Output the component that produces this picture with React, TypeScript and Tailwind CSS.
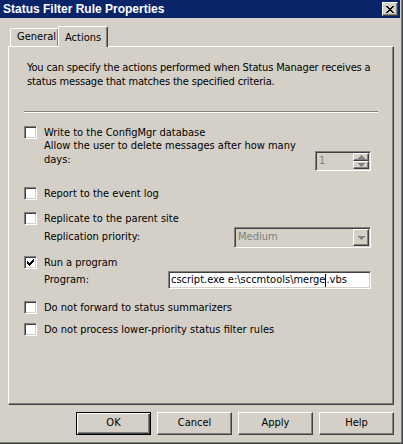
const SUNKEN =
  'border border-t-[#808080] border-l-[#808080] border-r-white border-b-white shadow-[inset_1px_1px_0_#404040,inset_-1px_-1px_0_#D4D0C8]'
const RAISED =
  'border border-t-white border-l-white border-r-[#404040] border-b-[#404040] shadow-[inset_-1px_-1px_0_#808080]'

// classic 7x7 check glyph
const CHECK_PX = [
  [6, 0], [5, 1], [6, 1], [0, 2], [4, 2], [5, 2], [6, 2], [0, 3], [1, 3], [3, 3], [4, 3], [5, 3],
  [0, 4], [1, 4], [2, 4], [3, 4], [4, 4], [1, 5], [2, 5], [3, 5], [2, 6],
]

function Checkbox({ checked }: { checked?: boolean }) {
  return (
    <span className={`relative block size-[13px] shrink-0 bg-white ${SUNKEN}`}>
      {checked && (
        <svg className="absolute left-[2px] top-[2px]" width="7" height="7" viewBox="0 0 7 7" shapeRendering="crispEdges">
          {CHECK_PX.map(([x, y]) => (
            <rect key={`${x}-${y}`} x={x} y={y} width="1" height="1" fill="#000" />
          ))}
        </svg>
      )}
    </span>
  )
}

function CheckRow({ label, checked, mt }: { label: string; checked?: boolean; mt: string }) {
  return (
    <div className={`flex h-[13px] items-center gap-[7px] ml-[15px] ${mt}`}>
      <Checkbox checked={checked} />
      <span className="leading-[13px] whitespace-nowrap">{label}</span>
    </div>
  )
}

function Arrow({ up, color = '#000' }: { up?: boolean; color?: string }) {
  return (
    <svg width="7" height="4" viewBox="0 0 7 4" shapeRendering="crispEdges">
      {up ? (
        <path d="M3 0h1v1h1v1h1v1h1v1H0V3h1V2h1V1h1z" fill={color} />
      ) : (
        <path d="M0 0h7v1H6v1H5v1H4v1H3V3H2V2H1V1H0z" fill={color} />
      )}
    </svg>
  )
}

function WinButton({ label, isDefault }: { label: string; isDefault?: boolean }) {
  return (
    <div
      className={
        isDefault
          ? 'flex h-[23px] w-[75px] items-center justify-center border border-black shadow-[inset_1px_1px_0_white,inset_-1px_-1px_0_#404040,inset_-2px_-2px_0_#808080]'
          : `flex h-[23px] w-[75px] items-center justify-center ${RAISED}`
      }
    >
      {label}
    </div>
  )
}

export default function App() {
  return (
    <div className="flex h-[444px] w-[403px] flex-col overflow-hidden border-r border-b border-[#404040] bg-[#D4D0C8] pr-[2px] text-[11px] text-black shadow-[inset_-1px_-1px_0_#808080] font-[family-name:'DejaVu_Sans_Condensed','DejaVu_Sans',sans-serif]">
      {/* Title bar */}
      <div className="flex h-[18px] shrink-0 items-center bg-[#0A246A] pl-[3px] pr-[2px]">
        <span className="text-[12px] font-bold leading-none text-white font-[family-name:'Liberation_Sans',Arial,sans-serif]">
          Status Filter Rule Properties
        </span>
        <div className={`ml-auto flex h-[14px] w-[16px] items-center justify-center bg-[#D4D0C8] ${RAISED}`}>
          <svg width="8" height="7" viewBox="0 0 8 7" shapeRendering="crispEdges">
            <path d="M0 0h2v1h1v1h2V1h1V0h2v1H7v1H6v1H5v1h1v1h1v1h1v1H6V6H5V5H3v1H2v1H0V6h1V5h1V4h1V3H2V2H1V1H0z" fill="#000" />
          </svg>
        </div>
      </div>

      {/* Tabs */}
      <div className="mt-[8px] flex h-[20px] items-end pl-[10px]">
        <div className="flex h-[18px] w-[48px] items-center rounded-tl-[2px] border-t border-l border-white pl-[6px] shadow-[inset_-1px_0_0_#808080]">
          General
        </div>
        <div className="relative z-10 -mb-[1px] flex h-[21px] w-[50px] items-start rounded-t-[2px] border-t border-l border-r border-t-white border-l-white border-r-[#404040] bg-[#D4D0C8] pt-[3px] pl-[6px] shadow-[inset_-1px_0_0_#808080]">
          Actions
        </div>
      </div>

      {/* Panel */}
      <div className="ml-[8px] flex h-[359px] w-[386px] flex-col border border-t-white border-l-white border-r-[#404040] border-b-[#404040] shadow-[inset_-1px_-1px_0_#808080]">
        <p className="mt-[14px] ml-[18px] leading-[14px] tracking-[-0.15px] whitespace-nowrap">
          You can specify the actions performed when Status Manager receives a
          <br />
          status message that matches the specified criteria.
        </p>

        <div className="mt-[22px] ml-[15px] h-[2px] w-[354px] border-t border-b border-t-[#808080] border-b-white" />

        <CheckRow label="Write to the ConfigMgr database" mt="mt-[13px]" />
        <div className="ml-[35px] flex">
          <p className="w-[271px] leading-[14px]">
            Allow the user to delete messages after how many
            <br />
            days:
          </p>
          <div className={`mt-[12px] flex h-[20px] w-[56px] items-center ${SUNKEN} bg-[#D4D0C8] p-[1px]`}>
            <span className="flex-1 pl-[2px] text-[#808080]">1</span>
            <div className="flex h-full w-[16px] flex-col">
              <div className={`flex flex-1 items-center justify-center ${RAISED}`}>
                <Arrow up color="#808080" />
              </div>
              <div className={`flex flex-1 items-center justify-center ${RAISED}`}>
                <Arrow color="#808080" />
              </div>
            </div>
          </div>
        </div>

        <CheckRow label="Report to the event log" mt="mt-[16px]" />
        <CheckRow label="Replicate to the parent site" mt="mt-[12px]" />
        <div className="mt-[2px] ml-[35px] flex h-[21px] items-center">
          <span className="w-[190px]">Replication priority:</span>
          <div className={`flex h-[21px] w-[137px] items-center ${SUNKEN} bg-[#D4D0C8] p-[1px]`}>
            <span className="flex-1 pl-[2px] text-[#808080]">Medium</span>
            <div className={`flex h-full w-[16px] items-center justify-center ${RAISED}`}>
              <Arrow color="#808080" />
            </div>
          </div>
        </div>

        <CheckRow label="Run a program" checked mt="mt-[8px]" />
        <div className="mt-[2px] ml-[35px] flex h-[18px] items-center">
          <span className="w-[124px]">Program:</span>
          <div className={`flex h-[18px] w-[203px] items-center bg-white pl-[2px] ${SUNKEN}`}>
            <span className="whitespace-nowrap">cscript.exe e:\sccmtools\merge</span>
            <span className="h-[13px] w-[1px] bg-black" />
            <span className="whitespace-nowrap">.vbs</span>
          </div>
        </div>

        <CheckRow label="Do not forward to status summarizers" mt="mt-[12px]" />
        <CheckRow label="Do not process lower-priority status filter rules" mt="mt-[9px]" />
      </div>

      {/* Buttons */}
      <div className="mt-[7px] ml-[76px] flex gap-[6px]">
        <WinButton label="OK" isDefault />
        <WinButton label="Cancel" />
        <WinButton label="Apply" />
        <WinButton label="Help" />
      </div>
    </div>
  )
}
